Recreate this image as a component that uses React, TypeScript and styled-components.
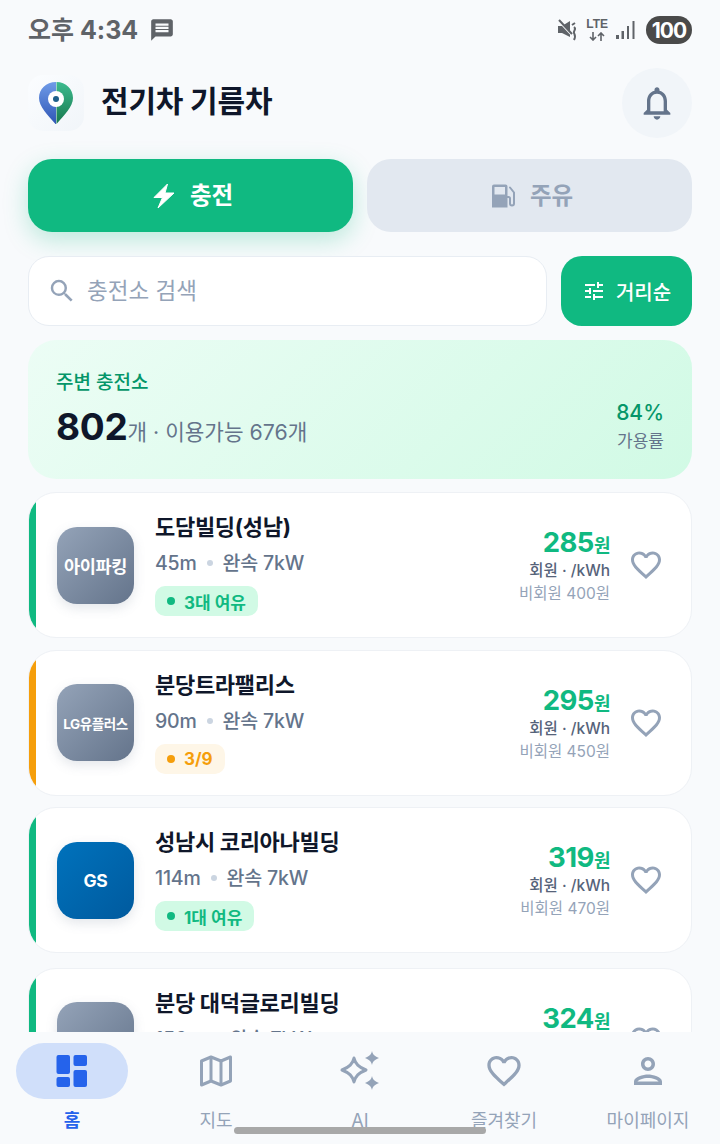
import React from 'react';
import styled, { createGlobalStyle } from 'styled-components';
import {
  MdFavoriteBorder,
  MdMessage,
  MdOutlineNotifications,
  MdOutlinePerson,
  MdSearch,
  MdTune,
} from 'react-icons/md';

const GlobalStyle = createGlobalStyle`
  html, body {
    margin: 0;
    padding: 0;
    background: #f8fafc;
  }
  * {
    box-sizing: border-box;
  }
`;

const FONT = `Inter, "Noto Sans CJK KR", "Noto Sans", sans-serif`;

const Screen = styled.div`
  position: relative;
  display: flex;
  flex-direction: column;
  width: 720px;
  height: 1144px;
  overflow: hidden;
  background: #f8fafc;
  font-family: ${FONT};
`;

const StatusBar = styled.div`
  display: flex;
  align-items: center;
  justify-content: space-between;
  height: 60px;
  padding: 0 28px;
  flex: none;
`;

const StatusLeft = styled.div`
  display: flex;
  align-items: center;
  gap: 11px;
  color: #5f6368;
  font-size: 25px;
  font-weight: 700;
  line-height: 1;
`;

const StatusRight = styled.div`
  display: flex;
  align-items: center;
  gap: 8px;
  color: #5f6368;
`;

const Lte = styled.div`
  display: flex;
  flex-direction: column;
  align-items: center;
  gap: 2px;
  font-family: "Liberation Sans", sans-serif;
  font-size: 12px;
  font-weight: 700;
  line-height: 11px;
`;

const Battery = styled.div`
  display: flex;
  align-items: center;
  justify-content: center;
  width: 46px;
  height: 28px;
  margin-left: 2px;
  border-radius: 14px;
  background: #4a4a4a;
  color: #fff;
  font-size: 21px;
  font-weight: 700;
  letter-spacing: -1px;
`;

const Content = styled.div`
  flex: 1;
  min-height: 0;
  overflow: hidden;
  padding: 8px 28px 0;
  display: flex;
  flex-direction: column;
`;

const Header = styled.header`
  display: flex;
  align-items: center;
  justify-content: space-between;
  height: 70px;
  flex: none;
`;

const Brand = styled.div`
  display: flex;
  align-items: center;
  gap: 17px;
`;

const LogoTile = styled.div`
  display: flex;
  align-items: center;
  justify-content: center;
  width: 56px;
  height: 56px;
  border-radius: 15px;
  background: linear-gradient(135deg, #fbfdff 0%, #f1f5f9 100%);
`;

const AppTitle = styled.h1`
  margin: 0 0 4px;
  color: #0f172a;
  font-size: 30px;
  font-weight: 700;
  line-height: 1.2;
  letter-spacing: -0.2px;
`;

const BellButton = styled.div`
  display: flex;
  align-items: center;
  justify-content: center;
  width: 70px;
  height: 70px;
  border-radius: 50%;
  background: #f1f5f9;
  color: #64748b;
`;

const Tabs = styled.div`
  display: grid;
  grid-template-columns: 1fr 1fr;
  gap: 14px;
  margin-top: 21px;
  flex: none;
`;

const Tab = styled.div<{ $active?: boolean }>`
  display: flex;
  align-items: center;
  justify-content: center;
  gap: 15px;
  height: 73px;
  padding-left: 5px;
  border-radius: 24px;
  font-size: 23.5px;
  font-weight: 700;
  background: ${(p) => (p.$active ? '#10b981' : '#e2e8f0')};
  color: ${(p) => (p.$active ? '#ffffff' : '#94a3b8')};
  box-shadow: ${(p) => (p.$active ? '0 8px 24px rgba(16, 185, 129, 0.26)' : 'none')};
`;

const TabLabel = styled.span`
  margin-bottom: 4px;
`;

const SearchRow = styled.div`
  display: flex;
  gap: 14px;
  margin-top: 24px;
  flex: none;
`;

const SearchBox = styled.div`
  display: flex;
  align-items: center;
  gap: 10px;
  flex: 1;
  height: 70px;
  padding: 0 18px;
  border: 1px solid #e8edf3;
  border-radius: 21px;
  background: #fff;
  color: #94a3b8;
  font-size: 22.5px;
`;

const SearchText = styled.span`
  margin-bottom: 4px;
`;

const SortButton = styled.div`
  display: flex;
  align-items: center;
  justify-content: center;
  gap: 10px;
  width: 131px;
  height: 70px;
  border-radius: 21px;
  background: #10b981;
  color: #fff;
  font-size: 20px;
  font-weight: 500;
`;

const Summary = styled.section`
  display: flex;
  align-items: center;
  justify-content: space-between;
  height: 139px;
  margin-top: 14px;
  padding: 0 28px;
  border-radius: 28px;
  background: linear-gradient(135deg, #ecfdf5 0%, #d1fae5 100%);
  flex: none;
`;

const SummaryText = styled.div`
  margin-top: 10px;
`;

const SummaryLabel = styled.div`
  color: #059669;
  font-size: 19px;
  font-weight: 500;
  line-height: 26px;
`;

const SummaryLine = styled.div`
  display: flex;
  align-items: baseline;
  margin-top: 4px;
  color: #64748b;
  font-size: 21.3px;
  line-height: 54px;
`;

const SummaryCount = styled.span`
  color: #0f172a;
  font-size: 37px;
  font-weight: 700;
  letter-spacing: -0.3px;
`;

const SummaryRate = styled.div`
  display: flex;
  flex-direction: column;
  align-items: flex-end;
  margin-top: 33px;
`;

const RateValue = styled.div`
  color: #059669;
  font-size: 21px;
  font-weight: 500;
  line-height: 30px;
`;

const RateLabel = styled.div`
  color: #64748b;
  font-size: 17px;
  line-height: 26px;
`;

const CardList = styled.div`
  display: flex;
  flex-direction: column;
  gap: 11.5px;
  margin-top: 13px;
`;

const Card = styled.article<{ $accent: string }>`
  position: relative;
  display: flex;
  align-items: center;
  height: 146px;
  padding: 0 27px 0 28px;
  overflow: hidden;
  border: 1px solid #eef1f5;
  border-radius: 28px;
  background: #fff;
  flex: none;

  &:last-child {
    margin-top: 3px;
  }

  &::before {
    content: '';
    position: absolute;
    left: -1px;
    top: -1px;
    bottom: -1px;
    width: 8px;
    background: ${(p) => p.$accent};
  }
`;

const Brandmark = styled.div<{ $bg: string; $small?: boolean }>`
  display: flex;
  align-items: center;
  justify-content: center;
  width: 77px;
  height: 77px;
  border-radius: 20px;
  background: ${(p) => p.$bg};
  color: #fff;
  font-size: ${(p) => (p.$small ? '13.5px' : '17.5px')};
  font-weight: 700;
  letter-spacing: -0.4px;
  box-shadow: 0 4px 12px rgba(100, 116, 139, 0.18);
  flex: none;
`;

const CardBody = styled.div`
  display: flex;
  flex-direction: column;
  flex: 1;
  min-width: 0;
  margin: 0 0 2px 21px;
`;

const StationName = styled.div`
  color: #0f172a;
  font-size: 22px;
  font-weight: 700;
  line-height: 30px;
  letter-spacing: -0.3px;
`;

const StationMeta = styled.div`
  display: flex;
  align-items: center;
  gap: 10px;
  margin-top: 6px;
  color: #64748b;
  font-size: 19.5px;
  font-weight: 500;
  line-height: 30px;
  letter-spacing: -0.2px;
`;

const Dot = styled.span`
  width: 6px;
  height: 6px;
  border-radius: 50%;
  background: #cbd5e1;
`;

const Badge = styled.div<{ $warn?: boolean }>`
  display: inline-flex;
  align-items: center;
  align-self: flex-start;
  gap: 9px;
  height: 30px;
  margin-top: 8px;
  padding: 0 12px;
  border-radius: 10px;
  background: ${(p) => (p.$warn ? '#fef6e7' : '#d1fae5')};
  color: ${(p) => (p.$warn ? '#f59e0b' : '#10b981')};
  font-size: 17px;
  font-weight: 700;

  &::before {
    content: '';
    width: 8px;
    height: 8px;
    border-radius: 50%;
    background: currentColor;
  }
`;

const PriceColumn = styled.div`
  display: flex;
  flex-direction: column;
  align-items: flex-end;
  padding-bottom: 2px;
  flex: none;
`;

const Price = styled.div`
  padding-top: 6px;
  color: #10b981;
  font-size: 27.5px;
  font-weight: 700;
  line-height: 28px;
  letter-spacing: -0.5px;

  span {
    font-size: 18px;
  }
`;

const PriceUnit = styled.div`
  color: #56637a;
  font-size: 15.5px;
  font-weight: 500;
  line-height: 22px;
`;

const PriceOther = styled.div`
  color: #94a3b8;
  font-size: 15.5px;
  line-height: 24px;
`;

const FavButton = styled.div`
  display: flex;
  margin-left: 18px;
  color: #94a3b8;
  flex: none;
`;

const BottomNav = styled.nav`
  display: grid;
  grid-template-columns: repeat(5, 1fr);
  height: 112px;
  padding-top: 11px;
  background: #f8fafc;
  flex: none;
`;

const NavItem = styled.div<{ $active?: boolean }>`
  display: flex;
  flex-direction: column;
  align-items: center;
  color: ${(p) => (p.$active ? '#2563eb' : '#94a3b8')};
  font-size: 18px;
  font-weight: ${(p) => (p.$active ? 700 : 400)};
`;

const NavIcon = styled.div<{ $active?: boolean }>`
  display: flex;
  align-items: center;
  justify-content: center;
  width: 112px;
  height: 56px;
  border-radius: 28px;
  background: ${(p) => (p.$active ? '#d0dffa' : 'transparent')};
`;

const NavLabel = styled.div`
  margin-top: 9px;
  line-height: 26px;
  white-space: nowrap;
`;

const HomeIndicator = styled.div`
  position: absolute;
  left: 234px;
  bottom: 10px;
  width: 252px;
  height: 7px;
  border-radius: 4px;
  background: #a8a8a8;
`;

const PinLogo = () => (
  <svg width="34" height="42" viewBox="0 0 34 42">
    <defs>
      <linearGradient id="pinL" x1="0" y1="0" x2="0" y2="1">
        <stop offset="0" stopColor="#6f9be8" />
        <stop offset="1" stopColor="#2f56b5" />
      </linearGradient>
      <linearGradient id="pinR" x1="0" y1="0" x2="0" y2="1">
        <stop offset="0" stopColor="#3dbb8f" />
        <stop offset="1" stopColor="#18794e" />
      </linearGradient>
    </defs>
    <path d="M17 0C7 0 0 7 0 16c0 9 9 17 16.500 26H17z" fill="url(#pinL)" />
    <path d="M17.500 0C27 0 34 7 34 16c0 9-9 17-16.500 26z" fill="url(#pinR)" />
    <circle cx="17" cy="17" r="8" fill="#fff" />
    <circle cx="17" cy="17" r="3" fill="#1d5f8a" />
  </svg>
);

const MuteIcon = () => (
  <svg width="20" height="22" viewBox="0 0 20 22" fill="currentColor">
    <path d="M0 7h4l8-5v16l-8-4H0z" />
    <path d="M0 1l14 15" stroke="#f8fafc" strokeWidth="2.500" />
    <path d="M1 1l13 14" stroke="currentColor" strokeWidth="2" />
    <path d="M14 6l3-2M16 8c3 2-1 4 0 6s2 3 0 7" fill="none" stroke="currentColor" strokeWidth="2" />
  </svg>
);

const DataArrows = () => (
  <svg width="16" height="9" viewBox="0 0 16 9" fill="none" stroke="currentColor" strokeWidth="1.600">
    <path d="M4 0v8M1 5l3 3 3-3" />
    <path d="M12 9V1M9 4l3-3 3 3" />
  </svg>
);

const SignalIcon = () => (
  <svg width="20" height="20" viewBox="0 0 20 20" fill="currentColor">
    <rect x="0" y="15" width="3" height="4" />
    <rect x="5.500" y="11" width="2.500" height="8" />
    <rect x="11" y="6" width="2" height="13" />
    <rect x="16.500" y="1" width="2" height="18" />
  </svg>
);

const BoltIcon = () => (
  <svg width="22" height="26" viewBox="0 0 22 26" fill="currentColor" stroke="currentColor" strokeWidth="1" strokeLinejoin="round">
    <path d="M14.500 1L1 14.500h8.500L5 25 21 10h-9z" />
  </svg>
);

const PumpIcon = () => (
  <svg width="24" height="24" viewBox="0 0 24 24" fill="none">
    <path
      fillRule="evenodd"
      d="M1 2.500A2 2 0 013 .500h11.500a2 2 0 012 2V23.500H1zM3.500 3v7.500h10.500V3z"
      fill="currentColor"
    />
    <path d="M16 13h1.500a1.500 1.500 0 011.500 1.500v5a2 2 0 004 0V8.500L19 3.500" stroke="currentColor" strokeWidth="2" strokeLinecap="round" />
  </svg>
);

const DashboardIcon = () => (
  <svg width="32" height="32" viewBox="0 0 32 32" fill="currentColor">
    <rect x="0.500" y="0" width="13.500" height="19" rx="2" />
    <rect x="0.500" y="22" width="13.500" height="10" rx="2" />
    <rect x="17.500" y="0" width="13.500" height="11" rx="2" />
    <rect x="17.500" y="15" width="13.500" height="17" rx="2" />
  </svg>
);

const MapIcon = () => (
  <svg width="34" height="34" viewBox="0 0 34 34" fill="none" stroke="currentColor" strokeWidth="3" strokeLinejoin="round">
    <path d="M2.500 7L12 3l10 4 9.500-4v24l-9.500 4-10-4-9.500 4z" />
    <path d="M12 3v24M22 7v24" />
  </svg>
);

const SparkleIcon = () => (
  <svg width="40" height="40" viewBox="0 0 40 40">
    <path
      d="M14 7c1.500 6 4.500 9 12 12-7.500 3-10.500 6-12 12-1.500-6-4.500-9-12-12 7.500-3 10.500-6 12-12z"
      fill="none"
      stroke="currentColor"
      strokeWidth="3"
      strokeLinejoin="round"
    />
    <path d="M32 0c.8 3.500 2.200 5 7 7-4.800 2-6.200 3.500-7 7-.8-3.500-2.200-5-7-7 4.800-2 6.200-3.500 7-7z" fill="currentColor" />
    <path d="M32 25c.8 3.500 2.200 5 7 7-4.800 2-6.200 3.500-7 7-.8-3.500-2.200-5-7-7 4.800-2 6.200-3.500 7-7z" fill="currentColor" />
  </svg>
);

interface Station {
  brand: string;
  brandBg: string;
  smallBrand?: boolean;
  name: string;
  distance: string;
  speed: string;
  badge: string;
  warn?: boolean;
  price: number;
  other: number;
}

const GRAY_BRAND = 'linear-gradient(135deg, #94a3b8 0%, #64748b 100%)';

const stations: Station[] = [
  { brand: '아이파킹', brandBg: GRAY_BRAND, name: '도담빌딩(성남)', distance: '45m', speed: '완속 7kW', badge: '3대 여유', price: 285, other: 400 },
  { brand: 'LG유플러스', brandBg: GRAY_BRAND, smallBrand: true, name: '분당트라팰리스', distance: '90m', speed: '완속 7kW', badge: '3/9', warn: true, price: 295, other: 450 },
  { brand: 'GS', brandBg: 'linear-gradient(135deg, #0072bc 0%, #005a9e 100%)', name: '성남시 코리아나빌딩', distance: '114m', speed: '완속 7kW', badge: '1대 여유', price: 319, other: 470 },
  { brand: '', brandBg: GRAY_BRAND, name: '분당 대덕글로리빌딩', distance: '156m', speed: '완속 7kW', badge: '2대 여유', price: 324, other: 470 },
];

const navItems = [
  { label: '지도', icon: <MapIcon /> },
  { label: 'AI', icon: <SparkleIcon /> },
  { label: '즐겨찾기', icon: <MdFavoriteBorder size={40} /> },
  { label: '마이페이지', icon: <MdOutlinePerson size={42} /> },
];

const App = () => {
  return (
    <Screen>
      <GlobalStyle />
      <StatusBar>
        <StatusLeft>
          오후 4:34
          <MdMessage size={26} />
        </StatusLeft>
        <StatusRight>
          <MuteIcon />
          <Lte>
            LTE
            <DataArrows />
          </Lte>
          <SignalIcon />
          <Battery>100</Battery>
        </StatusRight>
      </StatusBar>
      <Content>
        <Header>
          <Brand>
            <LogoTile>
              <PinLogo />
            </LogoTile>
            <AppTitle>전기차 기름차</AppTitle>
          </Brand>
          <BellButton>
            <MdOutlineNotifications size={40} />
          </BellButton>
        </Header>
        <Tabs>
          <Tab $active>
            <BoltIcon />
            <TabLabel>충전</TabLabel>
          </Tab>
          <Tab>
            <PumpIcon />
            <TabLabel>주유</TabLabel>
          </Tab>
        </Tabs>
        <SearchRow>
          <SearchBox>
            <MdSearch size={30} />
            <SearchText>충전소 검색</SearchText>
          </SearchBox>
          <SortButton>
            <MdTune size={24} />
            거리순
          </SortButton>
        </SearchRow>
        <Summary>
          <SummaryText>
            <SummaryLabel>주변 충전소</SummaryLabel>
            <SummaryLine>
              <SummaryCount>802</SummaryCount>개 · 이용가능 676개
            </SummaryLine>
          </SummaryText>
          <SummaryRate>
            <RateValue>84%</RateValue>
            <RateLabel>가용률</RateLabel>
          </SummaryRate>
        </Summary>
        <CardList>
          {stations.map((s) => (
            <Card key={s.name} $accent={s.warn ? '#f59e0b' : '#10b981'}>
              <Brandmark $bg={s.brandBg} $small={s.smallBrand}>
                {s.brand}
              </Brandmark>
              <CardBody>
                <StationName>{s.name}</StationName>
                <StationMeta>
                  {s.distance}
                  <Dot />
                  {s.speed}
                </StationMeta>
                <Badge $warn={s.warn}>{s.badge}</Badge>
              </CardBody>
              <PriceColumn>
                <Price>
                  {s.price}
                  <span>원</span>
                </Price>
                <PriceUnit>회원 · /kWh</PriceUnit>
                <PriceOther>비회원 {s.other}원</PriceOther>
              </PriceColumn>
              <FavButton>
                <MdFavoriteBorder size={36} />
              </FavButton>
            </Card>
          ))}
        </CardList>
      </Content>
      <BottomNav>
        <NavItem $active>
          <NavIcon $active>
            <DashboardIcon />
          </NavIcon>
          <NavLabel>홈</NavLabel>
        </NavItem>
        {navItems.map((item) => (
          <NavItem key={item.label}>
            <NavIcon>{item.icon}</NavIcon>
            <NavLabel>{item.label}</NavLabel>
          </NavItem>
        ))}
      </BottomNav>
      <HomeIndicator />
    </Screen>
  );
};

export default App;
